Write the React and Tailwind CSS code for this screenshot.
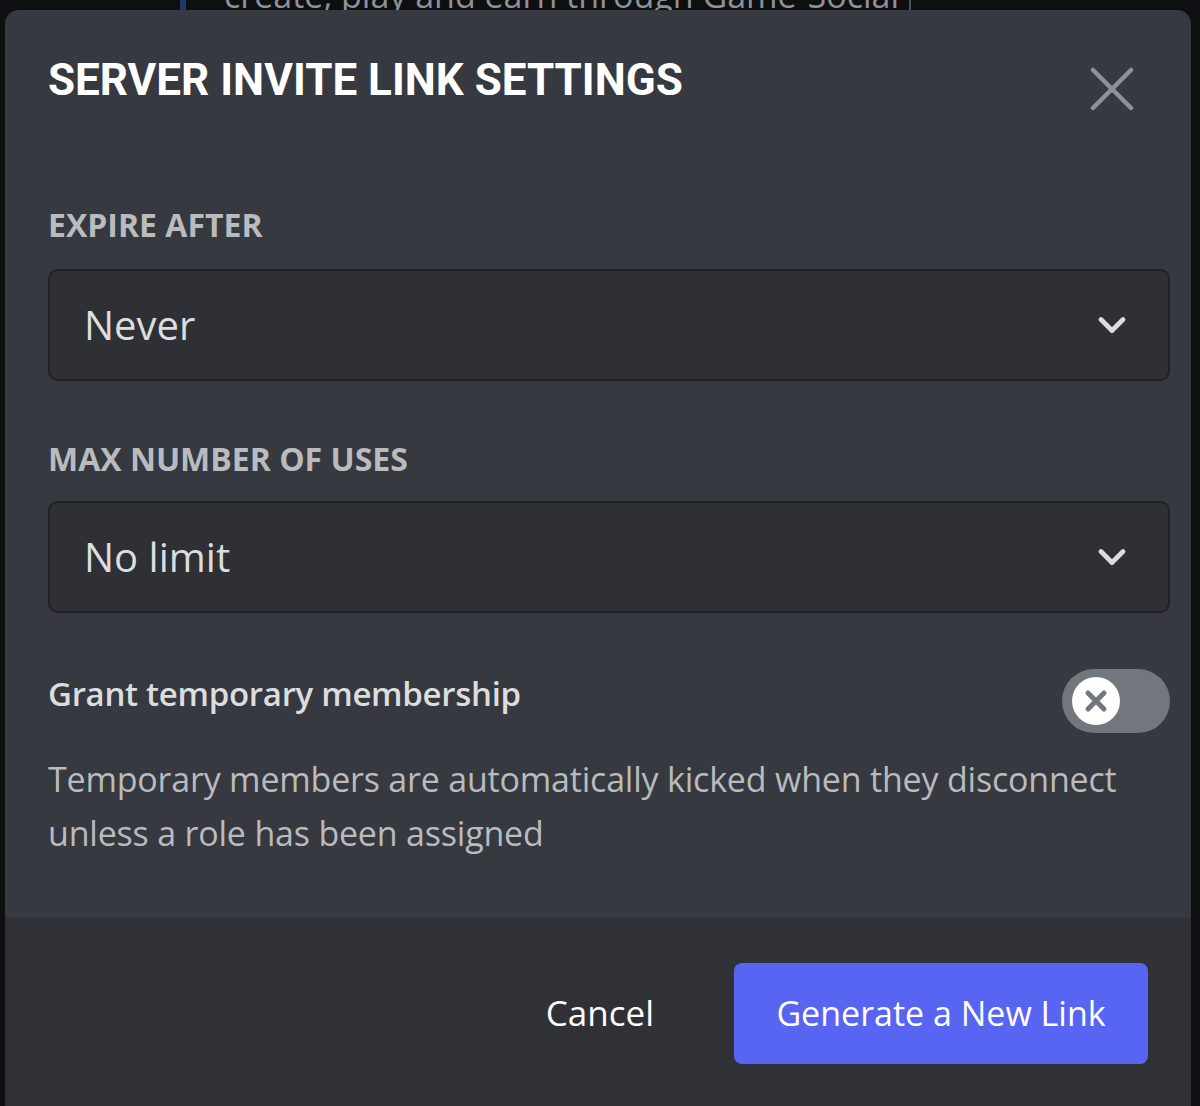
import { ChevronDown } from 'lucide-react';

const Select = ({ value }) => (
  <div className="h-[112px] rounded-[10px] bg-[#2e3035] border-2 border-[#202225] flex items-center justify-between pl-[34px] pr-[34px]">
    <span className="text-[40px] text-[#dcddde] font-medium">{value}</span>
    <ChevronDown size={44} strokeWidth={2.6} className="text-[#dcddde]" />
  </div>
);

const App = () => {
  return (
    <div className="w-[1200px] h-[1106px] bg-[#0e0f11] overflow-hidden font-['Open_Sans',sans-serif]">
      {/* backdrop strip */}
      <div className="h-[10px] overflow-hidden flex">
        <div className="ml-[180px] w-[6px] bg-[#1b3a6b]" />
        <p className="ml-[38px] -mt-[22px] text-[34px] text-[#8e9297] whitespace-nowrap leading-[34px]">
          create, play and earn through Game-Social
        </p>
        <div className="ml-[10px] w-[2px] bg-[#4f545c]" />
      </div>

      {/* modal */}
      <div className="ml-[5px] mr-[9px] h-[1110px] rounded-[14px] bg-[#36393f] overflow-hidden flex flex-col">
        <div className="px-[43px] pt-[44px] pb-[58px]">
          <div className="flex justify-between items-start">
            <h1 className="font-['Liberation_Sans_Narrow','Roboto',sans-serif] font-bold text-[44px] leading-[52px] text-white">
              SERVER INVITE LINK SETTINGS
            </h1>
            <svg width="44" height="44" viewBox="0 0 44 44" className="mt-[13px] mr-[14px]">
              <path d="M3 3 L41 41 M41 3 L3 41" stroke="#8e9297" strokeWidth="4.5" strokeLinecap="round" />
            </svg>
          </div>

          <h2 className="mt-[94px] text-[32px] font-bold text-[#b9bbbe] leading-[40px]">EXPIRE AFTER</h2>
          <div className="mt-[24px] -mr-[22px]">
            <Select value="Never" />
          </div>

          <h2 className="mt-[58px] text-[32px] font-bold text-[#b9bbbe] leading-[40px]">MAX NUMBER OF USES</h2>
          <div className="mt-[22px] -mr-[22px]">
            <Select value="No limit" />
          </div>

          <div className="mt-[56px] -mr-[22px] flex justify-between items-start">
            <span className="text-[33px] font-semibold text-[#dcddde] leading-[50px] tracking-[-0.3px]">Grant temporary membership</span>
            <div className="w-[108px] h-[64px] rounded-full bg-[#72767d] flex items-center pl-[10px]">
              <div className="w-[48px] h-[48px] rounded-full bg-white flex items-center justify-center">
                <svg width="26" height="26" viewBox="0 0 26 26">
                  <path d="M5 5 L21 21 M21 5 L5 21" stroke="#72767d" strokeWidth="5" strokeLinecap="round" />
                </svg>
              </div>
            </div>
          </div>

          <p className="mt-[19px] text-[34px] text-[#b9bbbe] leading-[54px] -mr-[40px] tracking-[-0.2px]">
            Temporary members are automatically kicked when they disconnect unless a role has been assigned
          </p>
        </div>

        <div className="flex-1 bg-[#2f3136] flex justify-end items-start pt-[45px] pr-[43px]">
          <button className="h-[101px] px-[40px] text-[35px] font-medium text-white mr-[40px]">Cancel</button>
          <button className="h-[101px] w-[414px] rounded-[8px] bg-[#5865f2] text-[34px] font-medium text-white">
            Generate a New Link
          </button>
        </div>
      </div>
    </div>
  );
};

export default App;
